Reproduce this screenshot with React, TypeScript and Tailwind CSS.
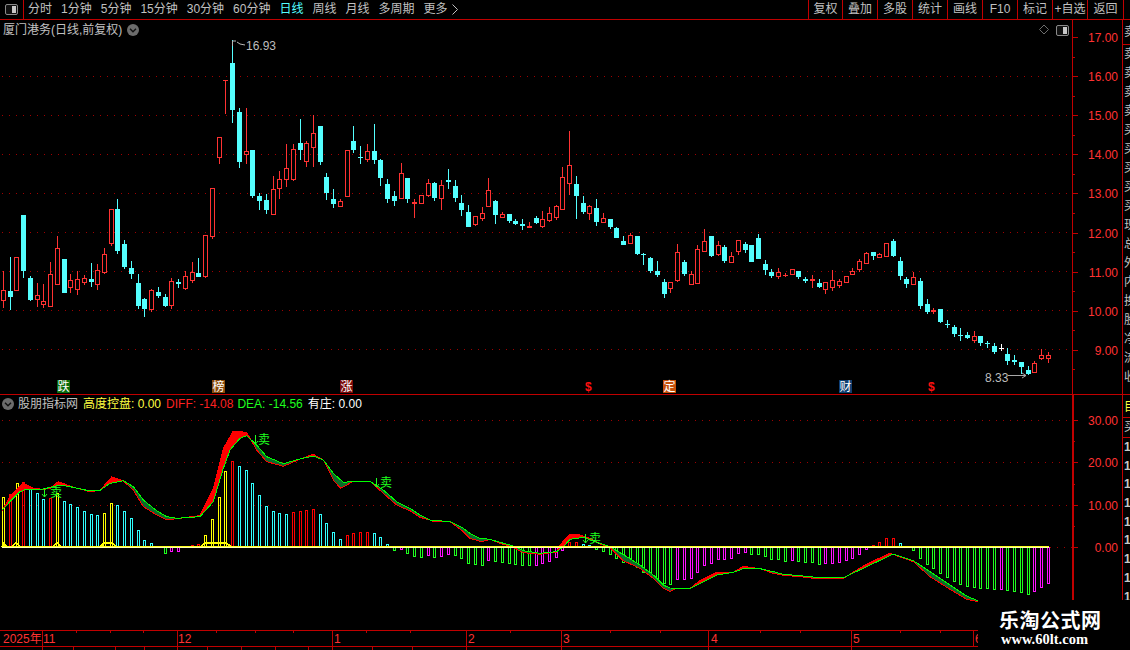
const RED = "#ff3232";
const CYAN = "#54ffff";
const AXIS = "#c00000";

// candle rows, read off at 3x: [x, colour, wickTop, bodyTop, bodyBottom, wickBottom]
type Row = [number, string, number, number, number, number];

const seg = (ox: number, oy: number, rows: Row[]) =>
  rows.map(([x, c, wt, bt, bb, wb]) => ({
    x: Math.round(ox + x / 3),
    c,
    wt: Math.round(oy + wt / 3),
    bt: Math.round(oy + bt / 3),
    bb: Math.round(oy + bb / 3),
    wb: Math.round(oy + wb / 3),
  }));

const candles = [
  ...seg(0, 180, [
    [10, "r", 272, 331, 360, 385],
    [31, "c", 232, 333, 351, 390],
    [49, "r", 232, 232, 330, 332],
    [70, "c", 105, 105, 273, 294],
    [91, "c", 288, 294, 360, 363],
    [112, "r", 310, 346, 357, 380],
    [130, "r", 312, 364, 372, 385],
    [151, "r", 246, 283, 377, 380],
    [172, "r", 168, 205, 311, 312],
    [193, "c", 237, 237, 339, 339],
    [211, "r", 282, 301, 320, 339],
    [232, "r", 273, 298, 326, 345],
    [253, "r", 285, 295, 305, 315],
    [274, "c", 250, 297, 306, 320],
    [292, "r", 252, 271, 311, 330],
    [313, "r", 205, 223, 275, 282],
    [334, "r", 88, 88, 188, 197],
    [352, "c", 57, 87, 213, 221],
    [373, "c", 180, 192, 261, 267],
    [394, "c", 243, 264, 282, 297],
    [415, "c", 282, 309, 378, 386],
    [433, "c", 354, 358, 387, 410],
    [454, "r", 328, 331, 387, 396],
    [475, "c", 321, 336, 348, 354],
    [496, "c", 343, 351, 378, 380],
    [514, "r", 295, 304, 374, 387],
    [535, "c", 297, 306, 312, 324],
    [556, "r", 274, 289, 323, 330],
    [577, "r", 247, 277, 299, 309],
    [595, "c", 235, 279, 291, 291],
    [616, "r", 166, 166, 287, 294],
    [637, "r", 25, 25, 167, 177],
  ]),
  ...seg(205, 35, [
    [43, "r", 307, 307, 367, 388],
    [61, "r", 136, 136, 139, 236],
    [82, "c", 15, 84, 225, 263],
    [103, "c", 220, 231, 381, 400],
    [124, "r", 220, 349, 356, 387],
    [142, "c", 345, 345, 483, 488],
    [163, "c", 475, 484, 499, 524],
    [184, "c", 477, 495, 525, 537],
    [205, "r", 424, 463, 537, 540],
    [223, "r", 408, 433, 460, 492],
    [244, "r", 328, 400, 433, 455],
  ]),
  ...seg(280, 100, [
    [40, "r", 132, 148, 236, 243],
    [61, "c", 57, 129, 150, 180],
    [79, "r", 123, 130, 182, 200],
    [100, "r", 45, 100, 140, 200],
    [121, "c", 78, 78, 186, 194],
    [139, "c", 220, 231, 279, 300],
    [160, "c", 267, 297, 312, 323],
    [181, "r", 297, 304, 317, 317],
    [202, "r", 151, 151, 287, 287],
    [220, "c", 78, 123, 150, 159],
    [241, "c", 138, 171, 174, 192],
    [262, "r", 132, 154, 177, 186],
    [283, "c", 72, 153, 180, 192],
    [301, "c", 177, 180, 234, 258],
    [322, "c", 237, 252, 297, 309],
    [343, "c", 273, 288, 303, 318],
    [364, "r", 189, 220, 294, 297],
    [382, "c", 234, 234, 297, 309],
    [403, "r", 297, 306, 312, 354],
    [424, "r", 286, 286, 308, 308],
    [445, "r", 237, 250, 284, 291],
    [463, "c", 246, 249, 294, 303],
    [484, "r", 240, 256, 293, 330],
    [505, "c", 207, 240, 246, 267],
    [526, "c", 240, 258, 294, 306],
    [544, "c", 285, 309, 330, 348],
    [565, "c", 315, 336, 381, 381],
    [586, "r", 348, 348, 372, 378],
    [607, "r", 321, 339, 353, 363],
    [625, "r", 234, 271, 318, 318],
    [646, "c", 300, 303, 345, 372],
    [667, "r", 336, 342, 351, 351],
    [688, "c", 342, 342, 363, 369],
    [706, "c", 357, 363, 372, 375],
    [727, "c", 357, 372, 378, 390],
    [748, "r", 366, 378, 384, 384],
    [769, "c", 348, 354, 369, 372],
    [787, "r", 333, 358, 378, 384],
    [808, "r", 321, 339, 360, 366],
    [829, "r", 315, 319, 350, 360],
    [847, "r", 201, 232, 327, 327],
    [868, "r", 93, 196, 249, 285],
    [889, "c", 228, 252, 288, 357],
    [910, "c", 288, 309, 336, 342],
    [928, "r", 315, 319, 339, 360],
    [949, "c", 297, 324, 366, 378],
    [970, "r", 339, 355, 366, 366],
    [991, "c", 357, 357, 381, 387],
    [1009, "c", 381, 384, 414, 414],
  ]),
  ...seg(620, 220, [
    [10, "c", 48, 63, 75, 75],
    [31, "r", 39, 45, 69, 72],
    [52, "c", 48, 48, 102, 105],
    [70, "c", 99, 102, 105, 135],
    [91, "c", 111, 114, 153, 159],
    [112, "c", 123, 153, 165, 172],
    [133, "c", 178, 186, 222, 234],
    [151, "r", 186, 187, 204, 219],
    [172, "r", 72, 97, 180, 186],
    [193, "c", 120, 126, 162, 168],
    [214, "r", 153, 162, 192, 192],
    [232, "r", 75, 88, 189, 190],
    [253, "r", 27, 64, 93, 93],
    [274, "c", 48, 48, 108, 111],
    [295, "r", 63, 75, 102, 108],
    [313, "c", 75, 81, 123, 129],
    [334, "r", 96, 108, 126, 126],
    [355, "r", 60, 60, 93, 105],
    [376, "c", 66, 72, 90, 99],
    [394, "c", 75, 75, 126, 126],
    [415, "c", 42, 54, 117, 117],
    [436, "c", 120, 132, 150, 165],
    [454, "c", 147, 156, 168, 174],
    [475, "r", 144, 156, 168, 177],
    [496, "r", 159, 164, 166, 171],
    [517, "r", 148, 148, 161, 161],
    [535, "c", 153, 153, 171, 177],
    [556, "c", 171, 177, 183, 189],
    [577, "r", 165, 177, 183, 204],
    [598, "c", 177, 189, 201, 204],
    [616, "r", 186, 187, 207, 222],
    [637, "r", 150, 181, 201, 213],
    [658, "r", 177, 183, 195, 204],
    [679, "r", 168, 168, 186, 190],
    [697, "r", 144, 153, 162, 165],
    [718, "r", 117, 123, 147, 156],
    [739, "r", 96, 99, 129, 132],
    [760, "c", 96, 96, 108, 120],
    [778, "r", 99, 102, 110, 111],
    [799, "r", 69, 69, 107, 111],
    [820, "c", 57, 63, 108, 111],
    [841, "c", 111, 123, 168, 180],
    [859, "c", 171, 177, 192, 204],
    [880, "r", 156, 171, 192, 192],
    [901, "c", 174, 183, 258, 267],
    [922, "c", 237, 252, 276, 282],
    [940, "r", 264, 270, 276, 282],
    [961, "c", 267, 267, 306, 309],
    [982, "c", 300, 312, 315, 324],
    [1003, "c", 315, 321, 342, 351],
    [1021, "c", 324, 345, 348, 363],
    [1042, "c", 336, 345, 354, 357],
    [1063, "r", 333, 348, 360, 369],
    [1081, "c", 348, 348, 369, 378],
    [1102, "c", 363, 369, 372, 384],
    [1123, "c", 369, 378, 396, 402],
    [1144, "w", 372, 384, 387, 393],
    [1162, "c", 384, 402, 423, 435],
    [1183, "c", 405, 420, 426, 435],
    [1204, "c", 426, 426, 441, 462],
    [1225, "c", 438, 450, 462, 465],
    [1243, "r", 423, 430, 456, 456],
    [1264, "r", 387, 405, 414, 420],
    [1285, "r", 396, 405, 414, 429],
  ]),
];

const BASE = 547;
const barColor: Record<string, string> = { y: "#ffff00", r: "#ff0000", c: "#30ffff", g: "#1eff1e", m: "#ff10ff" };

type Bar = [number, number, string];
const bars = (ox: number, oy: number, rows: Bar[]) =>
  rows.map(([x, v, c]) => ({ x: Math.round(ox + x / 3), v: Math.round(oy + v / 3), c }));

const histogram = [
  ...bars(0, 375, [
    [10, 367, "y"], [31, 358, "r"], [50, 325, "y"], [70, 320, "r"], [91, 343, "c"], [112, 355, "c"], [130, 372, "c"],
    [151, 370, "r"], [172, 355, "y"], [193, 379, "c"], [211, 388, "c"], [232, 397, "c"], [253, 408, "c"], [274, 418, "c"],
    [292, 421, "c"], [313, 415, "y"], [334, 385, "y"], [352, 391, "c"], [373, 409, "c"], [394, 430, "c"], [415, 466, "c"],
    [433, 496, "c"], [454, 505, "c"], [496, 533, "g"], [514, 527, "m"], [535, 527, "m"], [577, 511, "r"], [595, 507, "r"],
    [616, 481, "y"], [637, 433, "y"], [658, 367, "y"], [676, 288, "y"], [697, 259, "r"], [718, 274, "c"], [739, 286, "c"],
    [757, 325, "c"], [778, 361, "c"], [799, 394, "c"], [820, 409, "c"], [838, 415, "c"], [859, 418, "c"], [880, 412, "r"],
    [901, 409, "r"], [919, 406, "r"], [940, 403, "r"], [961, 418, "c"], [979, 445, "c"], [1000, 472, "c"], [1021, 492, "c"],
    [1042, 481, "r"], [1060, 475, "r"], [1081, 472, "r"], [1102, 472, "r"], [1123, 475, "c"], [1141, 487, "c"], [1162, 508, "c"],
    [1183, 524, "g"],
  ]),
  ...bars(400, 520, [
    [4, 86, "m"], [22, 98, "g"], [43, 107, "g"], [64, 110, "g"], [85, 104, "m"], [103, 110, "g"], [124, 107, "m"], [145, 101, "m"],
    [166, 104, "g"], [184, 113, "g"], [205, 128, "g"], [226, 131, "g"], [247, 134, "g"], [265, 119, "m"], [286, 122, "g"],
    [307, 125, "g"], [328, 128, "g"], [346, 131, "g"], [367, 134, "g"], [388, 134, "g"], [409, 134, "m"], [427, 128, "m"],
    [448, 122, "m"], [469, 110, "m"], [487, 89, "m"], [508, 65, "r"], [529, 65, "r"], [550, 72, "c"], [568, 75, "c"],
    [589, 86, "g"], [610, 92, "g"], [631, 101, "g"], [649, 113, "g"], [670, 125, "g"], [691, 128, "g"], [712, 140, "g"],
    [730, 155, "g"], [751, 165, "g"], [772, 175, "g"], [793, 188, "g"], [811, 191, "g"], [832, 176, "m"], [853, 176, "m"],
    [874, 173, "m"], [892, 155, "m"], [913, 134, "m"], [934, 128, "m"], [955, 116, "m"], [973, 116, "m"], [994, 113, "m"],
    [1015, 98, "m"], [1036, 95, "m"], [1054, 101, "g"], [1075, 101, "g"], [1096, 107, "g"], [1114, 116, "g"], [1135, 116, "g"],
    [1156, 122, "g"], [1177, 119, "m"], [1195, 122, "g"],
  ]),
  ...bars(800, 530, [
    [16, 95, "g"], [37, 95, "g"], [58, 101, "g"], [76, 98, "m"], [97, 98, "m"], [118, 95, "m"], [139, 89, "m"], [157, 83, "m"],
    [178, 71, "m"], [199, 56, "m"], [220, 46, "r"], [238, 37, "r"], [259, 25, "r"], [280, 25, "r"], [301, 40, "c"], [340, 59, "g"],
    [361, 83, "g"], [382, 101, "g"], [400, 113, "g"], [421, 128, "g"], [442, 140, "g"], [463, 152, "g"], [481, 161, "g"],
    [502, 167, "g"], [523, 170, "g"], [541, 173, "g"], [562, 173, "g"], [583, 176, "g"], [604, 176, "m"], [622, 179, "g"],
    [643, 182, "g"], [664, 185, "g"], [685, 191, "g"], [703, 182, "m"], [724, 170, "m"], [745, 158, "m"],
  ]),
];

type Pt = [number, number];
const pts = (ox: number, oy: number, rows: Pt[]): Pt[] => rows.map(([x, y]) => [ox + x / 3, oy + y / 3]);

const deaLine: Pt[] = [
  ...pts(0, 375, [
    [6, 405], [30, 380], [60, 350], [80, 342], [130, 342], [180, 330], [220, 337], [270, 348], [300, 346], [330, 325], [370, 317],
    [400, 335], [430, 375], [470, 407], [500, 425], [530, 430], [600, 425], [640, 380], [670, 280], [690, 225], [720, 190],
    [740, 182], [770, 210], [800, 245], [850, 266], [900, 252], [940, 243], [970, 255], [1000, 295], [1030, 322], [1060, 319],
    [1110, 319], [1150, 345], [1190, 380], [1200, 385],
  ]),
  ...pts(400, 520, [
    [30, -35], [60, -15], [90, 0], [150, 5], [190, 25], [210, 40], [240, 55], [270, 58], [300, 67], [340, 78], [370, 92], [420, 100],
    [470, 95], [490, 80], [510, 58], [550, 52], [600, 70], [630, 80], [680, 110], [720, 135], [760, 165], [790, 195], [810, 204],
    [870, 205], [900, 190], [950, 165], [1000, 157], [1030, 146], [1080, 146], [1120, 155], [1150, 163],
  ]),
  ...pts(800, 530, [
    [0, 137], [60, 143], [130, 143], [200, 110], [280, 72], [340, 92], [390, 125], [450, 165], [500, 198], [533, 212],
  ]),
];

const diffLine: Pt[] = [
  ...pts(0, 375, [
    [6, 408], [30, 365], [70, 325], [100, 340], [130, 343], [150, 340], [175, 320], [220, 337], [270, 350], [300, 346], [335, 306],
    [370, 318], [400, 345], [430, 395], [470, 420], [500, 435], [530, 431], [600, 422], [640, 340], [670, 220], [700, 168],
    [740, 172], [770, 225], [800, 260], [850, 274], [900, 252], [940, 238], [970, 255], [1000, 315], [1022, 340], [1060, 319],
    [1110, 319], [1150, 355], [1190, 390], [1200, 395],
  ]),
  ...pts(400, 520, [
    [30, -28], [60, -8], [90, 0], [105, 6], [150, 5], [190, 35], [210, 55], [245, 65], [270, 58], [300, 70], [340, 82], [370, 98],
    [420, 103], [470, 96], [480, 75], [510, 42], [530, 42], [570, 55], [600, 72], [630, 82], [670, 122], [720, 145], [760, 175],
    [790, 205], [810, 214], [830, 205], [870, 205], [900, 182], [950, 157], [1000, 157], [1030, 139], [1080, 146], [1120, 160],
    [1150, 166],
  ]),
  ...pts(800, 530, [
    [0, 140], [60, 147], [130, 145], [200, 102], [270, 70], [340, 95], [390, 140], [450, 178], [500, 208], [533, 215],
  ]),
];

const yAt = (line: Pt[], x: number) => {
  for (let i = 1; i < line.length; i++) {
    if (x <= line[i][0]) {
      const [x0, y0] = line[i - 1];
      const [x1, y1] = line[i];
      return y0 + ((y1 - y0) * (x - x0)) / (x1 - x0);
    }
  }
  return line[line.length - 1][1];
};

const ribbon = Array.from({ length: 976 }, (_, i) => {
  const x = i + 2;
  return { x, red: yAt(diffLine, x), green: yAt(deaLine, x) };
});

const toPoints = (line: Pt[]) => line.map(([x, y]) => `${x},${y}`).join(" ");

const bumps: Pt[][] = [
  [[2, 547], [4, 543], [7, 547]],
  [[11, 547], [16, 543], [21, 547]],
  [[52, 547], [57, 543], [62, 547]],
  [[100, 547], [104, 543], [112, 543], [117, 547]],
  [[200, 547], [205, 543], [226, 543], [232, 547]],
];

const sells: [number, number, number][] = [
  [44, 50, 497],
  [255, 258, 444],
  [376, 380, 487],
  [585, 589, 543],
];

const menu = ["分时", "1分钟", "5分钟", "15分钟", "30分钟", "60分钟", "日线", "周线", "月线", "多周期"];
const tools: [string, string][] = [
  ["复权", "w-[34px]"],
  ["叠加", "w-[35px]"],
  ["多股", "w-[35px]"],
  ["统计", "w-[35px]"],
  ["画线", "w-[35px]"],
  ["F10", "w-[35px]"],
  ["标记", "w-[35px]"],
  ["+自选", "w-[35px]"],
  ["返回", "w-[37px]"],
];

const priceTicks = Array.from({ length: 18 }, (_, i) => 37 + i * 19.55);
const priceLabels = [17, 16, 15, 14, 13, 12, 11, 10, 9].map((p, i) => ({ label: p.toFixed(2), y: Math.round(37 + i * 39.1) }));
const macdLabels = [
  { label: "30.00", y: 420 },
  { label: "20.00", y: 462 },
  { label: "10.00", y: 505 },
  { label: "0.00", y: 547 },
];

const dateMarks: [number, string, number?][] = [
  [42, "11", 43],
  [177, "12", 178],
  [332, "1", 334],
  [466, "2", 468],
  [561, "3", 563],
  [708, "4", 711],
  [851, "5", 853],
  [973, "6", 975],
];
const dateTicks = [76, 110, 143, 216, 255, 293, 366, 410, 510, 610, 660, 760, 800, 900, 940];
const bottomTicks = [42, 73, 115, 144, 177, 207, 241, 275, 308, 332, 372, 412, 466, 561, 708, 851];

function PanelIcon({ className }: { className: string }) {
  return (
    <svg className={className} width="13" height="11" viewBox="0 0 13 11">
      <rect x="0.5" y="0.5" width="12" height="10" rx="1.5" fill="#111" stroke="#8a8a8a" />
      <rect x="7" y="2" width="4" height="7" fill="#c8c8c8" />
    </svg>
  );
}

function Collapse() {
  return (
    <svg width="12" height="12" viewBox="0 0 12 12" className="shrink-0">
      <circle cx="6" cy="6" r="6" fill="#6c6c6c" />
      <path d="M3 4.8 L6 7.8 L9 4.8" fill="none" stroke="#111" strokeWidth="1.4" />
    </svg>
  );
}

function Candles() {
  return (
    <g shapeRendering="crispEdges">
      {candles.map((k, i) => {
        const color = k.c === "r" ? RED : k.c === "c" ? CYAN : "#ffffff";
        const solid = k.c !== "r" || k.bb - k.bt <= 2;
        return (
          <g key={i}>
            <rect x={k.x} y={k.wt} width="1" height={Math.max(k.wb - k.wt, 1)} fill={color} />
            {solid ? (
              <rect x={k.x - 2} y={k.bt} width="5" height={Math.max(k.bb - k.bt, 1)} fill={color} />
            ) : (
              <rect x={k.x - 1.5} y={k.bt + 0.5} width="4" height={k.bb - k.bt} fill="#000" stroke={color} />
            )}
          </g>
        );
      })}
    </g>
  );
}

function Tag({ x, text, bg }: { x: number; text: string; bg: string }) {
  return (
    <g>
      <rect x={x} y="380" width="13" height="13" fill={bg} />
      <text x={x + 0.5} y="391" fontSize="12" fill="#fff">
        {text}
      </text>
    </g>
  );
}

function MainChart() {
  return (
    <svg width="1072" height="374" viewBox="0 20 1072 374" className="block">
      {[76, 115, 154, 193, 232, 271, 310, 349].map((y) => (
        <line key={y} x1="2" x2="1072" y1={y + 0.5} y2={y + 0.5} stroke="#a00000" strokeDasharray="1 6" />
      ))}
      <Candles />
      <path d="M232.5 46 V41 H236 M237 42 L240 44 L245 45" fill="none" stroke="#b8b8b8" />
      <text x="246" y="50" fontSize="12" fill="#bdbdbd">16.93</text>
      <text x="985" y="382" fontSize="12" fill="#bdbdbd">8.33</text>
      <path d="M1008 375.5 H1026 M1022 373 L1026 375.5 L1022 378" fill="none" stroke="#a8a8a8" />
      <Tag x={57} text="跌" bg="#0a6a0a" />
      <Tag x={212} text="榜" bg="#8a4a0a" />
      <Tag x={340} text="涨" bg="#7a0a0a" />
      <Tag x={663} text="定" bg="#c8500a" />
      <Tag x={839} text="财" bg="#0f3f70" />
      <text x="585" y="391" fontSize="12" fontWeight="700" fill="#ff1010">$</text>
      <text x="928" y="391" fontSize="12" fontWeight="700" fill="#ff1010">$</text>
      <path d="M1044 25 L1048.5 29.5 L1044 34 L1039.5 29.5 Z" fill="none" stroke="#6e6e6e" />
    </svg>
  );
}

function MacdChart() {
  return (
    <svg width="1072" height="235" viewBox="0 395 1072 235" className="block">
      {[420, 462, 505].map((y) => (
        <line key={y} x1="2" x2="1072" y1={y + 0.5} y2={y + 0.5} stroke="#a00000" strokeDasharray="1 6" />
      ))}
      <line x1="1050" x2="1072" y1="547.5" y2="547.5" stroke="#a00000" strokeDasharray="1 6" />
      <g shapeRendering="crispEdges">
        {histogram.map((b, i) => (
          <rect
            key={i}
            x={b.x - 0.5}
            y={Math.min(b.v, BASE) + 0.5}
            width="2"
            height={Math.abs(b.v - BASE)}
            fill="none"
            stroke={barColor[b.c]}
          />
        ))}
        {ribbon.map((r) => (
          <rect
            key={r.x}
            x={r.x}
            y={Math.min(r.red, r.green)}
            width="1"
            height={Math.abs(r.red - r.green)}
            fill={r.red < r.green ? "#ff0000" : "#0c6b2c"}
          />
        ))}
        {bumps.map((b, i) => (
          <polyline key={i} points={toPoints(b)} fill="none" stroke="#ffff00" strokeWidth="1.5" />
        ))}
        <polyline points={toPoints(diffLine)} fill="none" stroke="#ff0000" />
        <polyline points={toPoints(deaLine)} fill="none" stroke="#00ff00" />
        <rect x="2" y="546" width="1047" height="1" fill="#ffff20" />
        <rect x="2" y="547" width="1047" height="1" fill="#ffffb0" />
      </g>
      {sells.map(([ax, tx, y]) => (
        <g key={ax}>
          <path d={`M${ax + 0.5} ${y - 9} V${y} M${ax - 2} ${y - 3} L${ax + 0.5} ${y} L${ax + 3} ${y - 3}`} fill="none" stroke="#1eff1e" />
          <text x={tx} y={y} fontSize="12" fill="#1eff1e">卖</text>
        </g>
      ))}
    </svg>
  );
}

function Axis({ h, top, ticks, labels, thick }: {
  h: number;
  top: number;
  ticks: number[];
  labels: { label: string; y: number }[];
  thick?: boolean;
}) {
  return (
    <svg width="50" height={h} viewBox={`1072 ${top} 50 ${h}`} className="block">
      <rect x="1072" y={top} width={thick ? 2 : 1} height={h} fill={AXIS} />
      {ticks.map((y) => (
        <rect key={y} x="1073" y={Math.round(y)} width="2" height="1" fill={AXIS} />
      ))}
      {labels.map((l) => (
        <g key={l.label}>
          <rect x="1073" y={l.y} width="5" height="1" fill={AXIS} />
          <text x="1118" y={l.y + 5} textAnchor="end" fontSize="12" fill={RED}>
            {l.label}
          </text>
        </g>
      ))}
    </svg>
  );
}

function TopStrip() {
  return (
    <div className="w-[7px] flex flex-col overflow-hidden text-[12px] leading-[19px] text-[#c0c0c0] whitespace-nowrap">
      <div className="h-[25px] border-b border-[#c00000] leading-[24px] pl-[1px]">卖⑤</div>
      {["卖④", "卖③", "卖②", "卖①", "买①", "买②", "买③", "买④", "买⑤", "现手", "总手", "外盘", "内盘", "换手", "股本", "净资", "流通", "收益"].map((t) => (
        <div key={t} className="pl-[1px]">{t}</div>
      ))}
    </div>
  );
}

function BottomStrip() {
  return (
    <div className="w-[7px] flex flex-col overflow-hidden text-[12px] text-[#c8c8c8] whitespace-nowrap">
      <div className="h-[21px] leading-[20px] pl-[1px] text-[#ffff40] border-b border-[#c00000] mt-[2px]">目</div>
      <div className="h-[20px] leading-[19px] pl-[1px] border-b border-[#c00000]">买</div>
      {Array.from({ length: 9 }, (_, i) => (
        <div key={i} className="h-[18.7px] leading-[18.7px] pl-[1px] font-bold">1</div>
      ))}
    </div>
  );
}

export default function App() {
  return (
    <div className="relative w-[1130px] h-[650px] bg-black overflow-hidden flex flex-col text-[12px] text-[#c0c0c0] font-['Liberation_Sans','Noto_Sans_CJK_SC',sans-serif]">
      {/* toolbar */}
      <div className="h-[20px] shrink-0 flex items-stretch border-b border-[#c00000] leading-[19px]">
        <div className="w-[24px] flex items-center justify-center border-r border-[#c00000]">
          <PanelIcon className="block" />
        </div>
        <div className="flex gap-[9px] pl-[4px]">
          {menu.map((m) => (
            <span key={m} className={m === "日线" ? "text-[#54ffff]" : ""}>{m}</span>
          ))}
          <span className="flex items-center gap-[4px]">
            更多
            <svg width="6" height="11" viewBox="0 0 6 11">
              <path d="M0.5 0.5 L5.5 5.5 L0.5 10.5" fill="none" stroke="#c0c0c0" />
            </svg>
          </span>
        </div>
        <div className="ml-auto mr-[6px] flex">
          {tools.map(([t, w], i) => (
            <div
              key={t}
              className={`${w} text-center border-l border-[#c00000] whitespace-nowrap ${i === tools.length - 1 ? "border-r" : ""}`}
            >
              {t}
            </div>
          ))}
        </div>
      </div>

      {/* price pane */}
      <div className="h-[375px] shrink-0 flex border-b border-[#c00000]">
        <div className="relative w-[1072px]">
          <MainChart />
          <div className="absolute left-[3px] top-[3px] flex items-center gap-[5px] leading-[14px]">
            <span>厦门港务(日线,前复权)</span>
            <Collapse />
          </div>
          <PanelIcon className="absolute right-[3px] top-[5px]" />
        </div>
        <div className="w-[51px] border-r border-[#c00000]">
          <Axis h={374} top={20} ticks={priceTicks} labels={priceLabels} />
        </div>
        <TopStrip />
      </div>

      {/* indicator pane */}
      <div className="h-[235px] shrink-0 flex">
        <div className="relative w-[1072px]">
          <MacdChart />
          <div className="absolute left-[2px] top-[2px] flex items-center leading-[14px] whitespace-nowrap">
            <Collapse />
            <span className="ml-[4px]">股朋指标网</span>
            <span className="ml-[5px] text-[#ffff40]">高度控盘: 0.00</span>
            <span className="ml-[5px] text-[#ff2020]">DIFF: -14.08</span>
            <span className="ml-[4px] text-[#1eff1e]">DEA: -14.56</span>
            <span className="ml-[5px] text-white">有庄: 0.00</span>
          </div>
        </div>
        <div className="w-[51px] border-r border-[#c00000]">
          <Axis
            h={235}
            top={395}
            thick
            ticks={[441, 484, 526]}
            labels={macdLabels}
          />
        </div>
        <BottomStrip />
      </div>

      {/* date axis */}
      <div className="h-[17px] shrink-0 border-y border-[#c00000]">
        <svg width="1130" height="15" viewBox="0 631 1130 15" className="block">
          <text x="3" y="643" fontSize="12" fill={RED}>2025年</text>
          {dateMarks.map(([x, label, tx]) => (
            <g key={x}>
              <rect x={x} y="631" width="1" height="15" fill={AXIS} />
              <text x={tx} y="643" fontSize="12" fill={RED}>{label}</text>
            </g>
          ))}
          {dateTicks.map((x) => (
            <rect key={x} x={x} y="631" width="1" height="2" fill={AXIS} />
          ))}
        </svg>
      </div>
      <div className="h-[3px] shrink-0">
        <svg width="1130" height="3" className="block">
          {bottomTicks.map((x) => (
            <rect key={x} x={x} y="0" width="1" height="3" fill={AXIS} />
          ))}
        </svg>
      </div>

      {/* watermark */}
      <div className="absolute left-[978px] top-[600px] w-[152px] h-[50px] bg-black flex flex-col items-start pl-[21px] text-white font-bold">
        <div className="mt-[9px] text-[20px] leading-[22px] tracking-[0.5px] font-['Noto_Sans_CJK_SC',sans-serif]">乐淘公式网</div>
        <div className="mt-[1px] ml-[2px] text-[14.5px] leading-[15px] font-['Liberation_Serif',serif]">www.60lt.com</div>
      </div>
    </div>
  );
}
